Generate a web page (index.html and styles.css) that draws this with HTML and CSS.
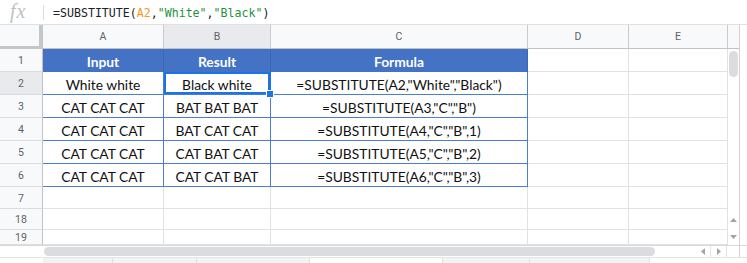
FILE: index.html
```html
<!DOCTYPE html>
<html lang="en">
  <head>
    <meta charset="UTF-8" />
    <meta name="viewport" content="width=device-width, initial-scale=1.0" />
    <title>SUBSTITUTE</title>
    <link rel="stylesheet" href="styles.css">
  </head>
  <body>
    <div class="app">
      <div class="formula-bar">
        <span class="fx">fx</span>
        <span class="fx-sep"></span>
        <span class="formula">=SUBSTITUTE(<span class="ref">A2</span>,<span class="str">"White"</span>,<span class="str">"Black"</span>)</span>
      </div>

      <div class="sheet">
        <div class="grid">
          <!-- column headers -->
          <div class="corner"></div>
          <div class="col-head">A</div>
          <div class="col-head active">B</div>
          <div class="col-head">C</div>
          <div class="col-head">D</div>
          <div class="col-head">E</div>

          <!-- row 1 -->
          <div class="row-head">1</div>
          <div class="cell tbl tbl-head">Input</div>
          <div class="cell tbl tbl-head">Result</div>
          <div class="cell tbl tbl-head">Formula</div>
          <div class="cell"></div>
          <div class="cell"></div>

          <!-- row 2 -->
          <div class="row-head active">2</div>
          <div class="cell tbl">White white</div>
          <div class="cell tbl sel">Black white</div>
          <div class="cell tbl">=SUBSTITUTE(A2,"White","Black")</div>
          <div class="cell"></div>
          <div class="cell"></div>

          <!-- row 3 -->
          <div class="row-head">3</div>
          <div class="cell tbl">CAT CAT CAT</div>
          <div class="cell tbl">BAT BAT BAT</div>
          <div class="cell tbl">=SUBSTITUTE(A3,"C","B")</div>
          <div class="cell"></div>
          <div class="cell"></div>

          <!-- row 4 -->
          <div class="row-head">4</div>
          <div class="cell tbl">CAT CAT CAT</div>
          <div class="cell tbl">BAT CAT CAT</div>
          <div class="cell tbl">=SUBSTITUTE(A4,"C","B",1)</div>
          <div class="cell"></div>
          <div class="cell"></div>

          <!-- row 5 -->
          <div class="row-head">5</div>
          <div class="cell tbl">CAT CAT CAT</div>
          <div class="cell tbl">CAT BAT CAT</div>
          <div class="cell tbl">=SUBSTITUTE(A5,"C","B",2)</div>
          <div class="cell"></div>
          <div class="cell"></div>

          <!-- row 6 -->
          <div class="row-head">6</div>
          <div class="cell tbl">CAT CAT CAT</div>
          <div class="cell tbl">CAT CAT BAT</div>
          <div class="cell tbl">=SUBSTITUTE(A6,"C","B",3)</div>
          <div class="cell"></div>
          <div class="cell"></div>

          <!-- rows 7, 18, 19 -->
          <div class="row-head">7</div>
          <div class="cell"></div>
          <div class="cell"></div>
          <div class="cell"></div>
          <div class="cell"></div>
          <div class="cell"></div>

          <div class="row-head">18</div>
          <div class="cell"></div>
          <div class="cell"></div>
          <div class="cell"></div>
          <div class="cell"></div>
          <div class="cell"></div>

          <div class="row-head">19</div>
          <div class="cell"></div>
          <div class="cell"></div>
          <div class="cell"></div>
          <div class="cell"></div>
          <div class="cell"></div>
        </div>

        <div class="vscroll">
          <div class="vscroll-head"></div>
          <div class="vscroll-track">
            <div class="vthumb"></div>
          </div>
          <div class="arrow-btn">
            <svg width="7" height="4" viewBox="0 0 7 4"><polygon points="0,4 7,4 3.5,0" fill="#a0a4a8" /></svg>
          </div>
          <div class="arrow-btn">
            <svg width="7" height="4" viewBox="0 0 7 4"><polygon points="0,0 7,0 3.5,4" fill="#a0a4a8" /></svg>
          </div>
        </div>
      </div>

      <div class="hscroll-row">
        <div class="hscroll-start"></div>
        <div class="hscroll-track">
          <div class="hthumb"></div>
        </div>
        <div class="harrow">
          <svg width="4" height="7" viewBox="0 0 4 7"><polygon points="4,0 4,7 0,3.5" fill="#a0a4a8" /></svg>
        </div>
        <div class="harrow">
          <svg width="4" height="7" viewBox="0 0 4 7"><polygon points="0,0 0,7 4,3.5" fill="#a0a4a8" /></svg>
        </div>
        <div class="hscroll-end"></div>
      </div>

      <div class="tabs">
        <div class="tab-space"></div>
        <div class="tab" style="width: 70px"></div>
        <div class="tab" style="width: 84px"></div>
        <div class="tab" style="width: 113px"></div>
        <div class="tab current" style="width: 133px"></div>
        <div class="tab" style="width: 87px"></div>
        <div class="tab" style="width: 120px"></div>
      </div>
    </div>
  </body>
</html>
```

FILE: styles.css
```css
* {
  margin: 0;
  padding: 0;
  box-sizing: border-box;
}

body {
  background: white;
  font-family: Roboto, "Liberation Sans", Arial, sans-serif;
}

.app {
  width: 747px;
  height: 263px;
  overflow: hidden;
}

/* formula bar */

.formula-bar {
  height: 25px;
  display: flex;
  align-items: center;
  border-bottom: 1px solid #e0e0e0;
}

.fx {
  width: 43px;
  padding-left: 10px;
  font-family: "Liberation Serif", serif;
  font-style: italic;
  font-size: 20px;
  color: #bdc1c6;
  letter-spacing: 1px;
  margin-top: -2px;
}

.fx-sep {
  width: 1px;
  height: 15px;
  background: #dadce0;
}

.formula {
  margin-left: 9px;
  font-family: "DejaVu Sans Mono", "Liberation Mono", monospace;
  font-size: 11.6px;
  color: #202124;
  padding-top: 1px;
}

.ref {
  color: #f7981d;
}

.str {
  color: #1f9140;
}

/* sheet */

.sheet {
  display: flex;
}

.grid {
  display: grid;
  grid-template-columns: 43px 121px 107px 257px 101px 99px;
  grid-template-rows: 24px 23px 23px 23px 23px 23px 23px 22px 21px 15px;
  width: 728px;
}

.corner {
  background: #f8f9fa;
  border-right: 4px solid #c4c7c9;
  border-bottom: 3px solid #c4c7c9;
}

.col-head {
  background: #f8f9fa;
  border-right: 1px solid #c8cacc;
  border-bottom: 1px solid #c0c2c4;
  color: #5f6368;
  font-size: 10.5px;
  display: flex;
  align-items: center;
  justify-content: center;
}

.row-head {
  background: #f8f9fa;
  border-right: 1px solid #c0c2c4;
  border-bottom: 1px solid #dcdcdc;
  color: #5f6368;
  font-size: 10.5px;
  display: flex;
  align-items: center;
  justify-content: center;
  padding-top: 1px;
}

.col-head.active,
.row-head.active {
  background: #e8eaed;
}

.cell {
  border-right: 1px solid #e2e2e2;
  border-bottom: 1px solid #e2e2e2;
  font-family: Lato, "Open Sans", sans-serif;
  font-size: 13.8px;
  color: #111;
  display: flex;
  align-items: center;
  justify-content: center;
  white-space: nowrap;
  padding-top: 2px;
}

.tbl {
  border-right-color: #4a7dd6;
  border-bottom-color: #4a7dd6;
}

.tbl-head {
  background: #4472c4;
  border-right-color: #3d66b3;
  border-bottom-color: #4472c4;
  color: white;
  font-weight: 700;
}

.sel {
  position: relative;
  box-shadow: inset 0 0 0 2px #1a73e8;
  border-right-color: #1a73e8;
}

.sel::after {
  content: "";
  position: absolute;
  right: -4px;
  bottom: -4px;
  width: 6px;
  height: 6px;
  background: #1a73e8;
  border: 1px solid white;
  box-sizing: content-box;
  z-index: 2;
}

/* vertical scrollbar */

.vscroll {
  width: 12px;
  display: flex;
  flex-direction: column;
  border-right: 1px solid #d0d2d4;
}

.vscroll-head {
  height: 24px;
  background: #f8f9fa;
  border-bottom: 1px solid #c0c2c4;
}

.vscroll-track {
  flex: 1;
  padding: 2px 1px 0 1px;
}

.vthumb {
  width: 9px;
  height: 26px;
  border-radius: 5px;
  background: #dadce0;
}

.arrow-btn {
  height: 17px;
  display: flex;
  align-items: center;
  justify-content: center;
}

/* horizontal scrollbar */

.hscroll-row {
  display: flex;
  height: 12px;
  border-top: 1px solid #d8d8d8;
}

.hscroll-start {
  width: 43px;
}

.hscroll-track {
  width: 652px;
  padding-top: 1px;
}

.hthumb {
  width: 611px;
  height: 9px;
  margin-left: 1px;
  border-radius: 5px;
  background: #dadce0;
}

.harrow {
  width: 16px;
  display: flex;
  align-items: center;
  justify-content: center;
  border-right: 1px solid #e4e4e4;
}

.hscroll-end {
  width: 13px;
  border-right: 1px solid #d0d2d4;
}

/* sheet tabs strip */

.tabs {
  display: flex;
  height: 6px;
  border-top: 1px solid #e4e4e4;
}

.tab-space {
  width: 43px;
}

.tab {
  background: #f1f3f4;
  border-right: 1px solid #e0e0e0;
}

.tab.current {
  background: white;
}
```
